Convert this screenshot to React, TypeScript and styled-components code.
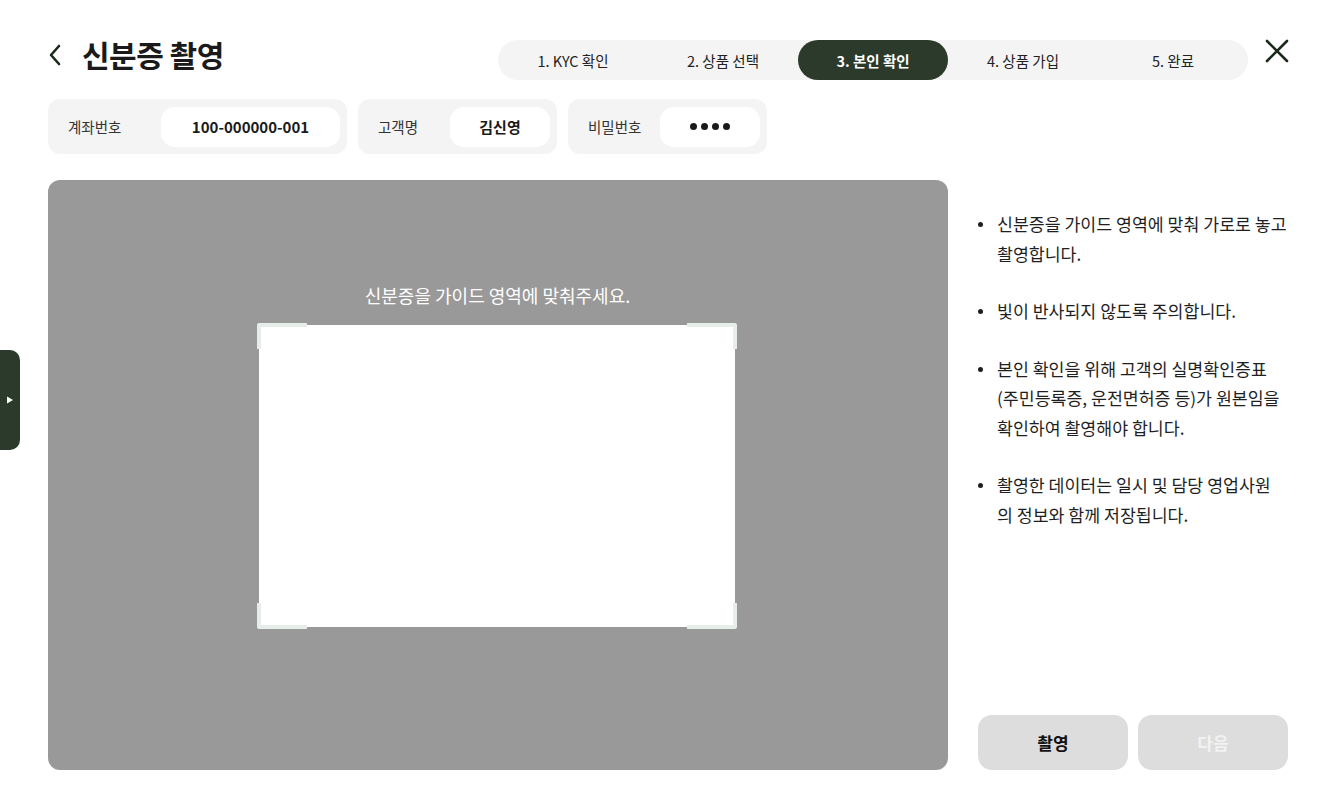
import React from "react";
import styled, { createGlobalStyle } from "styled-components";

const GlobalStyle = createGlobalStyle`
  html, body { margin: 0; padding: 0; background: #fff; }
  body { font-family: "Noto Sans CJK KR", "Noto Sans", sans-serif; color: #1a1a1a; }
  * { box-sizing: border-box; }
`;

const Page = styled.div`
  width: 1318px;
  height: 800px;
  position: relative;
  padding: 40px 28px 30px 48px;
  display: flex;
  flex-direction: column;
`;

const Header = styled.header`
  display: flex;
  align-items: center;
  height: 40px;
`;

const Back = styled.button`
  border: none;
  background: none;
  padding: 0;
  width: 24px;
  height: 28px;
  margin-right: 10px;
  margin-top: -10px;
  display: flex;
  align-items: center;
  cursor: pointer;
`;

const Title = styled.h1`
  margin: 0;
  font-size: 30px;
  font-weight: 700;
  letter-spacing: -0.5px;
  color: #1a1a1a;
  line-height: 40px;
  position: relative;
  top: -6px;
`;

const Stepper = styled.ol`
  list-style: none;
  margin: 0 0 0 auto;
  padding: 0;
  display: flex;
  background: #f4f4f4;
  border-radius: 20px;
  height: 40px;
`;

const Step = styled.li<{ $active?: boolean }>`
  width: 150px;
  height: 40px;
  border-radius: 20px;
  display: flex;
  align-items: center;
  justify-content: center;
  font-size: 14.5px;
  font-weight: ${(p) => (p.$active ? 700 : 400)};
  color: ${(p) => (p.$active ? "#fff" : "#222")};
  background: ${(p) => (p.$active ? "#2b3a2b" : "transparent")};
`;

const Close = styled.button`
  border: none;
  background: none;
  padding: 0;
  margin-left: 16px;
  margin-top: -18px;
  width: 26px;
  height: 26px;
  display: flex;
  align-items: center;
  justify-content: center;
  cursor: pointer;
`;

const InfoRow = styled.div`
  display: flex;
  gap: 11px;
  margin-top: 19px;
`;

const InfoCard = styled.div<{ $w: number; $labelW: number }>`
  width: ${(p) => p.$w}px;
  height: 55px;
  background: #f4f4f4;
  border-radius: 12px;
  display: grid;
  grid-template-columns: ${(p) => p.$labelW}px 1fr;
  align-items: center;
  padding: 0 7px 0 20px;
`;

const InfoLabel = styled.span`
  font-size: 14.5px;
  color: #333;
`;

const InfoValue = styled.span`
  height: 40px;
  background: #fff;
  border-radius: 14px;
  display: flex;
  align-items: center;
  justify-content: center;
  gap: 4px;
  font-size: 15px;
  font-weight: 700;
  color: #1a1a1a;
`;

const Dot = styled.i`
  width: 7px;
  height: 7px;
  border-radius: 50%;
  background: #1a1a1a;
`;

const Main = styled.div`
  display: flex;
  gap: 30px;
  margin-top: 26px;
  flex: 1;
`;

const Camera = styled.section`
  width: 900px;
  height: 590px;
  background: #999999;
  border-radius: 12px;
  display: flex;
  flex-direction: column;
  align-items: center;
  padding-top: 102px;
`;

const Guide = styled.p`
  margin: 0 0 15px;
  font-size: 18px;
  color: #fff;
  line-height: 26px;
  padding-right: 1px;
`;

const Frame = styled.div`
  position: relative;
  width: 480px;
  height: 306px;
  margin-left: -3px;
  padding: 2px;
`;

const Card = styled.div`
  width: 100%;
  height: 100%;
  background: #fff;
`;

const Corner = styled.span<{ $v: "top" | "bottom"; $h: "left" | "right" }>`
  position: absolute;
  width: 50px;
  height: 26px;
  ${(p) => p.$v}: 0;
  ${(p) => p.$h}: 0;
  border-${(p) => p.$v}: 4px solid #e7eee9;
  border-${(p) => p.$h}: 4px solid #e7eee9;
  border-${(p) => p.$v}-${(p) => p.$h}-radius: 3px;
`;

const Side = styled.aside`
  flex: 1;
  display: flex;
  flex-direction: column;
  padding-top: 29px;
`;

const Tips = styled.ul`
  margin: 0;
  padding: 0 0 0 19px;
  list-style: none;
  display: flex;
  flex-direction: column;
  gap: 28px;
`;

const Tip = styled.li`
  position: relative;
  font-size: 17.3px;
  line-height: 29.5px;
  color: #1f1f1f;
  white-space: nowrap;
  &::before {
    content: "";
    position: absolute;
    left: -19px;
    top: 13px;
    width: 5px;
    height: 5px;
    border-radius: 50%;
    background: #1f1f1f;
  }
`;

const Actions = styled.div`
  margin-top: auto;
  display: flex;
  gap: 10px;
`;

const Button = styled.button<{ $disabled?: boolean }>`
  width: 150px;
  height: 55px;
  border: none;
  border-radius: 14px;
  background: #dddddd;
  font-family: inherit;
  font-size: 17px;
  font-weight: 700;
  color: ${(p) => (p.$disabled ? "#f2f2f2" : "#111")};
  cursor: pointer;
`;

const SideTab = styled.button`
  position: absolute;
  left: 0;
  top: 350px;
  width: 20px;
  height: 100px;
  border: none;
  padding: 0;
  background: #2b3a2b;
  border-radius: 0 10px 10px 0;
  display: flex;
  align-items: center;
  justify-content: center;
  cursor: pointer;
`;

const steps = ["1. KYC 확인", "2. 상품 선택", "3. 본인 확인", "4. 상품 가입", "5. 완료"];

const tips = [
  ["신분증을 가이드 영역에 맞춰 가로로 놓고", "촬영합니다."],
  ["빛이 반사되지 않도록 주의합니다."],
  ["본인 확인을 위해 고객의 실명확인증표", "(주민등록증, 운전면허증 등)가 원본임을", "확인하여 촬영해야 합니다."],
  ["촬영한 데이터는 일시 및 담당 영업사원", "의 정보와 함께 저장됩니다."],
];

export default function App() {
  return (
    <>
      <GlobalStyle />
      <Page>
        <Header>
          <Back aria-label="뒤로">
            <svg width="14" height="24" viewBox="0 0 14 24">
              <path d="M11 3 L3 12 L11 21" fill="none" stroke="#1a2a1a" strokeWidth="2.6" strokeLinecap="round" strokeLinejoin="round" />
            </svg>
          </Back>
          <Title>신분증 촬영</Title>
          <Stepper>
            {steps.map((s, i) => (
              <Step key={s} $active={i === 2}>
                {s}
              </Step>
            ))}
          </Stepper>
          <Close aria-label="닫기">
            <svg width="24" height="24" viewBox="0 0 24 24">
              <path d="M2 2 L22 22 M22 2 L2 22" stroke="#1a2a1a" strokeWidth="2.6" strokeLinecap="round" />
            </svg>
          </Close>
        </Header>

        <InfoRow>
          <InfoCard $w={299} $labelW={93}>
            <InfoLabel>계좌번호</InfoLabel>
            <InfoValue>100-000000-001</InfoValue>
          </InfoCard>
          <InfoCard $w={199} $labelW={72}>
            <InfoLabel>고객명</InfoLabel>
            <InfoValue>김신영</InfoValue>
          </InfoCard>
          <InfoCard $w={199} $labelW={72}>
            <InfoLabel>비밀번호</InfoLabel>
            <InfoValue aria-label="비밀번호 4자리">
              <Dot />
              <Dot />
              <Dot />
              <Dot />
            </InfoValue>
          </InfoCard>
        </InfoRow>

        <Main>
          <Camera>
            <Guide>신분증을 가이드 영역에 맞춰주세요.</Guide>
            <Frame>
              <Card />
              <Corner $v="top" $h="left" />
              <Corner $v="top" $h="right" />
              <Corner $v="bottom" $h="left" />
              <Corner $v="bottom" $h="right" />
            </Frame>
          </Camera>
          <Side>
            <Tips>
              {tips.map((lines, i) => (
                <Tip key={i}>
                  {lines.map((l, j) => (
                    <React.Fragment key={j}>
                      {j > 0 && <br />}
                      {l}
                    </React.Fragment>
                  ))}
                </Tip>
              ))}
            </Tips>
            <Actions>
              <Button>촬영</Button>
              <Button $disabled>다음</Button>
            </Actions>
          </Side>
        </Main>

        <SideTab aria-label="열기">
          <svg width="8" height="8" viewBox="0 0 8 8">
            <path d="M1 0.5 L7 4 L1 7.5 Z" fill="#fff" />
          </svg>
        </SideTab>
      </Page>
    </>
  );
}
